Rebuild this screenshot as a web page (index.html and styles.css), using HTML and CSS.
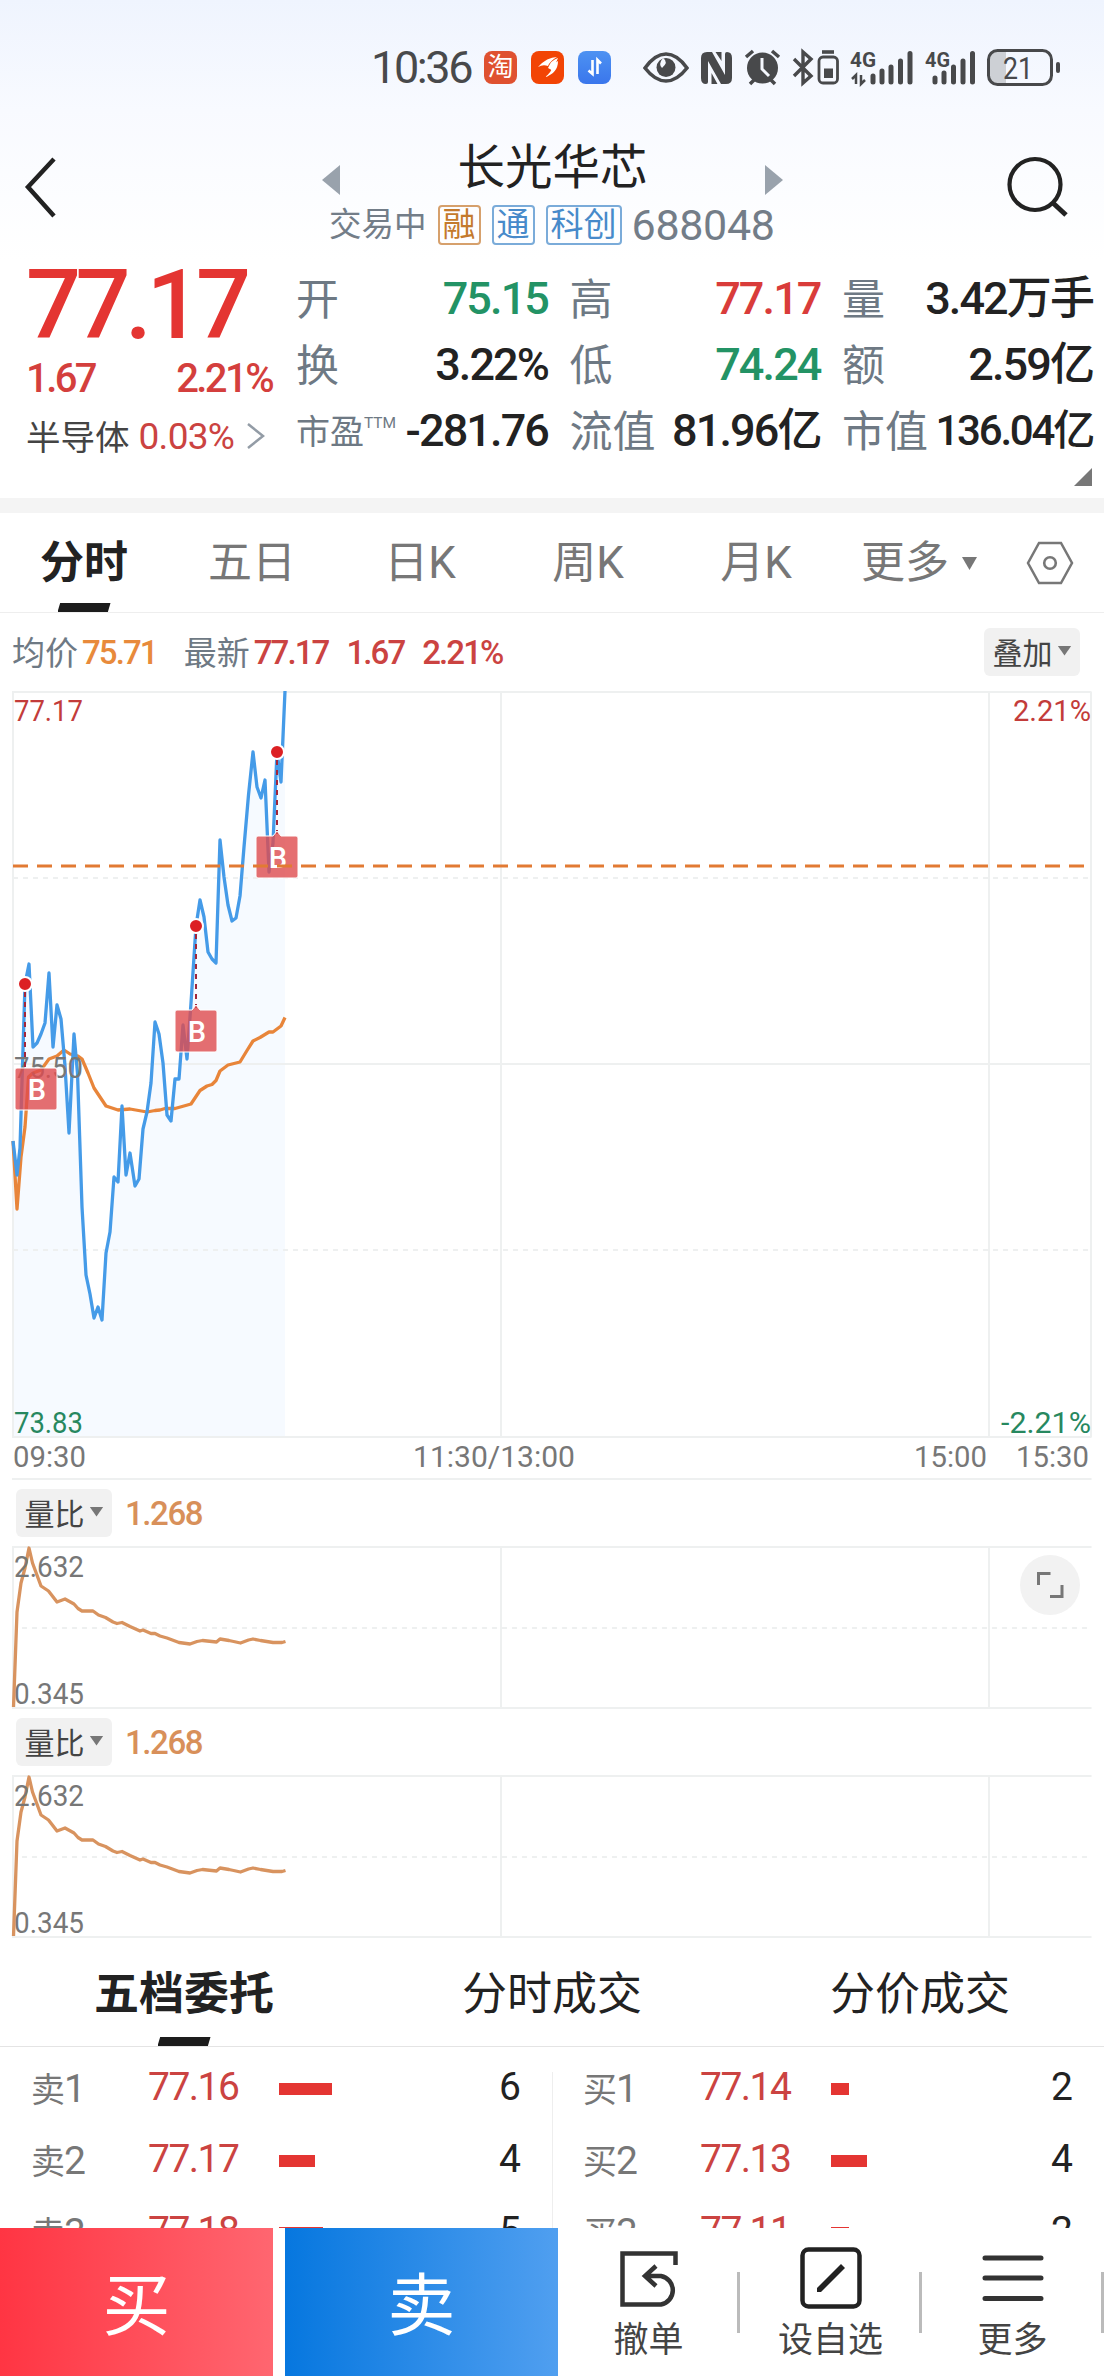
FILE: index.html
```html
<!DOCTYPE html>
<html lang="zh-CN">
<head>
<meta charset="utf-8">
<title>长光华芯 688048</title>
<link rel="stylesheet" href="styles.css">
</head>
<body>
<header class="top">
  <div class="status">
    <span class="clock">10:36</span>
    <div class="apps">
      <span class="app app-tao">淘</span>
      <span class="app app-ali"><svg width="33" height="33" viewBox="0 0 33 33"><g fill="#fff"><path d="M7 16 Q16 6 26 6 Q19 10 17 15 Q12 13 7 16Z"/><path d="M17 17 Q20 9 27 7 Q24 13 22 21 Q20 18 17 17Z"/><path d="M14 26 Q20 22 22 15 Q24 11 27 10 Q27 22 14 26Z"/></g></svg></span>
      <span class="app app-sync"><svg width="33" height="33" viewBox="0 0 33 33"><path d="M14.5 9V23L10.5 19.5M19.5 23V9L23 12.5" fill="none" stroke="#fff" stroke-width="2.6"/></svg></span>
    </div>
    <div class="sys">
      <svg width="46" height="45" viewBox="643 45 46 45"><path d="M645 68Q655 54 666 54Q677 54 687 68Q677 81 666 81Q655 81 645 68Z" fill="none" stroke="#48494b" stroke-width="3.6"/><circle cx="666" cy="67.500" r="9.500" fill="#48494b"/><path d="M663 58Q669 62 662 68Q658 64 663 58Z" fill="#f5f8fe"/></svg>
      <svg width="33" height="45" viewBox="700 45 33 45"><path d="M707 52H712L725 75V54Q725 52 727 52Q732 52 732 58V78Q732 84 726 84H721L708 61V82Q708 84 706 84Q701 84 701 78V58Q701 52 707 52Z" fill="#48494b"/><path d="M715.500 52H721.500V61ZM711.500 84V73L717.500 84Z" fill="#48494b"/></svg>
      <svg width="37" height="45" viewBox="744 45 37 45"><circle cx="762.500" cy="68" r="15.500" fill="#48494b"/><path d="M746 57L753 51M779 57L772 51M750 84L755 79M775 84L770 79" stroke="#48494b" stroke-width="3.500"/><path d="M762 58V69L769 76" fill="none" stroke="#f5f8fe" stroke-width="3"/></svg>
      <svg width="47" height="45" viewBox="792 45 47 45"><path d="M794 59L811 76L803 83V52L811 59L794 76" fill="none" stroke="#48494b" stroke-width="3.400"/><rect x="819" y="57" width="18.500" height="26" rx="4" fill="none" stroke="#48494b" stroke-width="2.800"/><rect x="824" y="68.500" width="9" height="9.500" fill="#48494b"/><path d="M822 52H834" stroke="#48494b" stroke-width="3.600"/></svg>
      <svg width="64" height="45" viewBox="850 45 64 45"><text x="850" y="66.500" textLength="26" lengthAdjust="spacingAndGlyphs" class="net">4G</text><path d="M873 76V82M882 71V82M891 67V82M900.500 61V82M910 53.500V82" stroke="#48494b" stroke-width="5" stroke-linecap="round"/><path d="M856 84V75L852 79M861 75V84L865 80" fill="none" stroke="#48494b" stroke-width="2.500"/></svg>
      <svg width="51" height="45" viewBox="925 45 51 45"><text x="925" y="66.500" textLength="25" lengthAdjust="spacingAndGlyphs" class="net">4G</text><path d="M935 78V82M944 73V82M953.500 67V82M963 61V82M972.500 53.500V82" stroke="#48494b" stroke-width="5" stroke-linecap="round"/></svg>
      <svg width="74" height="45" viewBox="987 45 74 45"><path d="M1006 51H997Q989 51 989 59V76Q989 84 997 84H1006Z" fill="#cdd0d5"/><rect x="988.500" y="50.500" width="63" height="34" rx="9" fill="none" stroke="#48494b" stroke-width="3"/><rect x="1056" y="62" width="4" height="11" rx="2" fill="#48494b"/><text x="1003" y="79" textLength="30" lengthAdjust="spacingAndGlyphs" class="pct">21</text></svg>
    </div>
  </div>
  <div class="nav">
    <svg class="back" width="40" height="64" viewBox="0 0 40 64"><path d="M36 3L10 31L36 60" fill="none" stroke="#222" stroke-width="4.500"/></svg>
    <div class="title">
      <div class="name-row"><i class="tri-left"></i><h1>长光华芯</h1><i class="tri-right"></i></div>
      <div class="sub"><span>交易中</span><b class="tag warm">融</b><b class="tag">通</b><b class="tag">科创</b><span class="code">688048</span></div>
    </div>
    <svg class="search" width="64" height="64" viewBox="0 0 64 64"><circle cx="29" cy="29.500" r="25.500" fill="none" stroke="#222" stroke-width="4.200"/><path d="M47 48L60 60" stroke="#222" stroke-width="5"/></svg>
  </div>
  <section class="quote">
    <div class="price">
      <div class="last">77.17</div>
      <div class="change"><span>1.67</span><span>2.21%</span></div>
      <div class="sector"><span>半导体</span><em>0.03%</em><svg width="20" height="30" viewBox="0 0 20 30"><path d="M2 3L17 15L2 27" fill="none" stroke="#939ca6" stroke-width="2.500"/></svg></div>
    </div>
    <dl class="stats">
      <div><dt>开</dt><dd class="down">75.15</dd></div>
      <div><dt>高</dt><dd class="up">77.17</dd></div>
      <div><dt>量</dt><dd>3.42万手</dd></div>
      <div><dt>换</dt><dd>3.22%</dd></div>
      <div><dt>低</dt><dd class="down">74.24</dd></div>
      <div><dt>额</dt><dd>2.59亿</dd></div>
      <div><dt class="small">市盈<sup>TTM</sup></dt><dd>-281.76</dd></div>
      <div><dt>流值</dt><dd>81.96亿</dd></div>
      <div><dt>市值</dt><dd class="tight">136.04亿</dd></div>
    </dl>
  </section>
  <div class="expand"><i></i></div>
</header>

<nav class="tabs">
  <a class="active">分时</a><a>五日</a><a>日K</a><a>周K</a><a>月K</a>
  <a class="more">更多<i class="caret"></i></a>
  <svg class="hex" width="48" height="44" viewBox="0 0 48 44"><path d="M13 2H35L46 22L35 42H13L2 22Z" fill="none" stroke="#777" stroke-width="2.500"/><circle cx="24" cy="22" r="5.800" fill="none" stroke="#777" stroke-width="2.600"/></svg>
</nav>

<div class="info">
  <span class="lbl">均价</span><b class="avg">75.71</b>
  <span class="lbl second">最新</span><b>77.17</b><b>1.67</b><b>2.21%</b>
  <button class="pill">叠加<i class="caret"></i></button>
</div>

<svg class="chart" width="1104" height="790" viewBox="0 691 1104 790">
  <path d="M13 1141L17 1175L20 1148L25 984L29 964L33 1047L37 1043L41 1034L45 1023L49 973L53 1047L57 1005L61 1019L65 1066L69 1133L74 1034L77.500 1073L82 1207L86 1275L90 1294L94 1318L98 1307L102 1320L106 1253L110 1232L114 1177L118 1182L122 1106L126 1175L130 1153L135 1186L139 1179L143 1129L147 1112L151 1083L155 1022L159 1034L163 1063L167 1115L171 1121L175 1079L179 1079L183 1025L187 1059L191 1003L196 926L200 900L204 917L208 952L212 959L216 963L220 840L224 877L228 905L232 921L236 918L240 896L244 847L248.500 795L253 752L257 787L261 798L265 780L269 872L273 843L277 752L281 782L285 691V1437H13Z" fill="#f6faff"/>
  <path d="M12 692H1091.500M12 1064H1091.500M12 1437H1091.500M12 1479H1091.500M13 692V1437M501 692V1437M989 692V1437M1091 692V1437" class="grid"/>
  <path d="M13 878H1091M13 1250H1091" class="grid dashed"/>
  <path d="M13 1141L17 1209L21 1157L25 1127L28.500 1077L33 1073L41 1070L49 1059L57 1056L64 1050L70 1054L78 1056L82 1059L88 1073L94 1088L100 1097L106 1106L118 1110L130 1109L147 1112L155 1110.500L160 1110L165 1108.500L175 1108.500L191 1104L200 1090.500L207 1086L212 1084.500L216 1080.500L220 1071L228 1065L240 1062L247 1050.500L253 1041L260 1037.500L269 1032L273 1032L281 1026L285 1017.500" class="avg-line"/>
  <path d="M13 1141L17 1175L20 1148L25 984L29 964L33 1047L37 1043L41 1034L45 1023L49 973L53 1047L57 1005L61 1019L65 1066L69 1133L74 1034L77.500 1073L82 1207L86 1275L90 1294L94 1318L98 1307L102 1320L106 1253L110 1232L114 1177L118 1182L122 1106L126 1175L130 1153L135 1186L139 1179L143 1129L147 1112L151 1083L155 1022L159 1034L163 1063L167 1115L171 1121L175 1079L179 1079L183 1025L187 1059L191 1003L196 926L200 900L204 917L208 952L212 959L216 963L220 840L224 877L228 905L232 921L236 918L240 896L244 847L248.500 795L253 752L257 787L261 798L265 780L269 872L273 843L277 752L281 782L285 691" class="price-line"/>
  <g class="axis">
    <text x="14" y="721" textLength="69" lengthAdjust="spacingAndGlyphs" class="t-up">77.17</text>
    <text x="1013" y="721" textLength="78" lengthAdjust="spacingAndGlyphs" class="t-up">2.21%</text>
    <text x="14" y="1077.500" textLength="69" lengthAdjust="spacingAndGlyphs">75.50</text>
    <text x="14" y="1433" textLength="69" lengthAdjust="spacingAndGlyphs" class="t-down">73.83</text>
    <text x="1001" y="1433" textLength="90" lengthAdjust="spacingAndGlyphs" class="t-down">-2.21%</text>
    <text x="13" y="1466.500" textLength="73" lengthAdjust="spacingAndGlyphs">09:30</text>
    <text x="413" y="1466.500" textLength="162" lengthAdjust="spacingAndGlyphs">11:30/13:00</text>
    <text x="914" y="1466.500" textLength="73" lengthAdjust="spacingAndGlyphs">15:00</text>
    <text x="1016" y="1466.500" textLength="73" lengthAdjust="spacingAndGlyphs">15:30</text>
  </g>
  <g class="marks">
    <path d="M25 992V1068M196 934V1008M277 760V834" class="stem"/>
    <path d="M15 1070q0-2 2-2H55q2 0 2 2V1108q0 2-2 2H17q-2 0-2-2Z"/>
    <path d="M175 1012q0-2 2-2H192L196 1005L200 1010H215q2 0 2 2V1050q0 2-2 2H177q-2 0-2-2Z"/>
    <path d="M256 838q0-2 2-2H273L277 831L281 836H296q2 0 2 2V876q0 2-2 2H258q-2 0-2-2Z"/>
    <circle cx="25" cy="984" r="7"/><circle cx="196" cy="926" r="7"/><circle cx="277" cy="752" r="7"/>
    <text x="37" y="1099.500">B</text><text x="197" y="1041.500">B</text><text x="278" y="867.500">B</text>
  </g>
  <path d="M13 866H1086" class="cost"/>
</svg>

<section class="indicator">
  <div class="ind-head"><button class="pill">量比<i class="caret"></i></button><b>1.268</b></div>
  <svg width="1104" height="164" viewBox="0 1545 1104 164">
    <path d="M12 1547H1091.500M12 1708H1091.500M13 1547V1708M501 1547V1708M989 1547V1708" class="grid"/>
    <path d="M22 1628H1087" class="grid dashed"/>
    <path id="ratio" d="M13.500 1707L17 1612L21 1583L25 1568L29 1548L32.500 1563L41 1586L48.500 1591L57 1602L65 1599L74 1604L78 1608.500L82 1611H93L98.500 1615L105.500 1617.500L113 1622L117 1623.500L122 1622.500L130 1626.500L140 1631L143 1630L151 1633.500H155L160 1636L167 1638L179 1642.500L190 1644L197 1641.500L202.500 1640.500L216.500 1642L220 1639L229 1640.500L240.500 1643L248.500 1640L253 1639L260.500 1640.500L273 1642.500H282L285.500 1641.500" class="ratio-line"/>
    <g class="axis"><text x="14" y="1577" textLength="70" lengthAdjust="spacingAndGlyphs">2.632</text><text x="14" y="1704" textLength="70" lengthAdjust="spacingAndGlyphs">0.345</text></g>
    <circle cx="1050" cy="1585" r="30" fill="#f2f2f2"/>
    <path d="M1038.500 1585V1573.500H1050.500M1050 1596.500H1062V1585" fill="none" stroke="#777" stroke-width="3"/>
  </svg>
</section>
<section class="indicator">
  <div class="ind-head"><button class="pill">量比<i class="caret"></i></button><b>1.268</b></div>
  <svg width="1104" height="164" viewBox="0 1545 1104 164">
    <path d="M12 1547H1091.500M12 1708H1091.500M13 1547V1708M501 1547V1708M989 1547V1708" class="grid"/>
    <path d="M22 1628H1087" class="grid dashed"/>
    <use href="#ratio"/>
    <g class="axis"><text x="14" y="1577" textLength="70" lengthAdjust="spacingAndGlyphs">2.632</text><text x="14" y="1704" textLength="70" lengthAdjust="spacingAndGlyphs">0.345</text></g>
  </svg>
</section>

<nav class="book-tabs"><a class="active">五档委托</a><a>分时成交</a><a>分价成交</a></nav>
<section class="book">
  <ul>
    <li><span>卖<small>1</small></span><em>77.16</em><i style="width:53px"></i><b>6</b></li>
    <li><span>卖<small>2</small></span><em>77.17</em><i style="width:36px"></i><b>4</b></li>
    <li><span>卖<small>3</small></span><em>77.18</em><i style="width:44px"></i><b>5</b></li>
  </ul>
  <ul>
    <li><span>买<small>1</small></span><em>77.14</em><i style="width:18px"></i><b>2</b></li>
    <li><span>买<small>2</small></span><em>77.13</em><i style="width:36px"></i><b>4</b></li>
    <li><span>买<small>3</small></span><em>77.11</em><i style="width:18px"></i><b>2</b></li>
  </ul>
</section>

<footer class="actions">
  <button class="buy">买</button>
  <button class="sell">卖</button>
  <div class="act"><svg width="62" height="62" viewBox="0 0 62 62"><path d="M57.500 18V6.500H4.500V57.500H43A14.500 14.500 0 0 0 43 29H28M38 19L27 29L38 39" fill="none" stroke="#333" stroke-width="4.500"/></svg><span>撤单</span></div>
  <i class="rule"></i>
  <div class="act"><svg width="62" height="62" viewBox="0 0 62 62"><rect x="2.500" y="2.500" width="57" height="57" rx="6" fill="none" stroke="#222" stroke-width="4.500"/><path d="M17 45V41L41 17L45 21L21 45Z" fill="#222"/></svg><span>设自选</span></div>
  <i class="rule"></i>
  <div class="act"><svg width="62" height="62" viewBox="0 0 62 62"><path d="M3 11H59M3 31H59M3 51.500H59" stroke="#333" stroke-width="5" stroke-linecap="round"/></svg><span>更多</span></div>
  <i class="rule"></i>
</footer>
</body>
</html>
```
FILE: styles.css
```css
* { box-sizing: border-box; margin: 0; padding: 0; }
body { width: 1104px; height: 2376px; overflow: hidden; display: flex; flex-direction: column; background: #fff; color: #222; font-family: Roboto, "Noto Sans CJK SC", sans-serif; }
i, em { font-style: normal; }
button { border: 0; font-family: inherit; }
svg { display: block; flex: none; }
ul { list-style: none; }

.top { height: 513px; flex: none; display: flex; flex-direction: column; border-bottom: 15px solid #f4f4f4; background: linear-gradient(#eff4fe 0, #f8faff 110px, #fff 260px); }

.status { height: 45px; margin-top: 45px; display: flex; align-items: center; padding-left: 371px; flex: none; }
.clock { width: 113px; font-size: 45px; line-height: 45px; letter-spacing: -2.4px; color: #48494b; }
.apps { display: flex; gap: 14px; width: 159px; }
.app { width: 33px; height: 33px; border-radius: 8px; text-align: center; font-size: 26px; line-height: 32px; color: #fff; }
.app-tao { background: #df5130; }
.app-ali { background: #f24405; }
.app-sync { background: linear-gradient(#4d92f2, #3a76ec); }
.sys { display: flex; gap: 11px; }
.net { font-size: 21px; font-weight: 700; fill: #48494b; }
.pct { font-size: 32px; fill: #48494b; }

.nav { height: 160px; flex: none; display: flex; padding-left: 18px; }
.back { margin-top: 66px; }
.search { margin-top: 65px; margin-left: 219px; }
.title { width: 470px; margin-top: 46px; margin-left: 259px; }
.name-row { display: flex; align-items: center; justify-content: space-between; height: 64px; padding: 0 4px 0 5px; }
h1 { font-size: 47.500px; line-height: 64px; font-weight: 400; }
.tri-left, .tri-right { width: 18px; height: 30px; background: #99a2ac; margin-top: 24px; }
.tri-left { clip-path: polygon(0 50%, 100% 0, 100% 100%); }
.tri-right { clip-path: polygon(0 0, 100% 50%, 0 100%); }
.sub { display: flex; align-items: center; height: 40px; margin-top: 5px; padding-left: 12px; font-size: 32.500px; line-height: 40px; color: #737d88; }
.tag { height: 40px; padding: 0 3px; margin-left: 11px; font-size: 33px; line-height: 36px; font-weight: 400; color: #478aca; border: 2px solid #7aabd9; border-radius: 4px; }
.tag.warm { color: #c47a2c; border-color: #d6a06c; }
.code { font-size: 43px; letter-spacing: -.3px; margin-left: 10px; }

.quote { display: flex; height: 216px; flex: none; }
.price { width: 296px; padding: 10px 0 0 26px; color: #e43532; }
.last { font-size: 97px; line-height: 90px; font-weight: 500; letter-spacing: -5.600px; }
.change { display: flex; justify-content: space-between; width: 246px; font-size: 40px; line-height: 58px; font-weight: 500; letter-spacing: -2.600px; color: #d43f3d; }
.sector { display: flex; align-items: center; height: 56px; color: #444; font-size: 34.500px; }
.sector span { margin-top: -3px; }
.sector em { color: #cb4341; font-size: 37px; letter-spacing: -.7px; margin: 0 12px 0 9px; }
.stats { display: grid; grid-template-columns: 252px 251px 251px; column-gap: 21.500px; grid-auto-rows: 66px; padding-top: 16px; }
.stats div { display: flex; justify-content: space-between; line-height: 66px; white-space: nowrap; }
.stats dt { color: #6e7984; font-size: 43px; padding-top: 1px; }
.stats dt.small { font-size: 34px; display: flex; }
.stats sup { font-size: 15.500px; line-height: 48px; }
.stats dd { font-size: 45px; font-weight: 500; letter-spacing: -1.900px; }
.stats .tight { font-size: 42px; letter-spacing: -2.200px; }
.up { color: #d93c3a; }
.down { color: #239365; }
.expand { display: flex; justify-content: flex-end; padding: 2px 12px 0; }
.expand i { width: 18px; height: 18px; background: #777; clip-path: polygon(100% 0, 100% 100%, 0 100%); }

.tabs { height: 100px; flex: none; display: flex; align-items: center; border-bottom: 1px solid #eee; font-size: 44px; color: #777; }
.tabs a { width: 168px; height: 99px; padding-top: 2px; line-height: 97px; text-align: center; }
.tabs .active, .book-tabs .active { font-weight: 700; color: #222; display: flex; flex-direction: column; align-items: center; }
.active::after { content: ""; flex: none; width: 53px; height: 9px; margin-top: -9px; background: #1c1c1c; clip-path: polygon(5% 0, 100% 0, 95% 100%, 0 100%); }
.tabs .more { width: 165px; margin-left: 21px; text-align: left; display: flex; align-items: center; }
.caret { display: inline-block; width: 14px; height: 10px; background: #777; clip-path: polygon(0 0, 100% 0, 50% 100%); }
.more .caret { width: 15px; height: 13px; margin-left: 13px; }

.info { height: 78px; flex: none; display: flex; align-items: center; padding: 0 24px 0 12px; font-size: 33px; }
.info .lbl { color: #6e7984; margin-top: -2px; }
.info .second { margin-left: 27px; }
.info b { font-weight: 500; color: #cb4341; letter-spacing: -1.900px; margin: 0 14px 0 4px; }
.info b.avg { color: #e88a3b; margin-right: 0; }
.pill { width: 96px; height: 48px; border-radius: 6px; background: #f1f1f1; color: #444; font-size: 30px; display: flex; align-items: center; justify-content: center; gap: 5px; padding-bottom: 3px; }
.info .pill { margin-left: auto; }

.chart { margin-bottom: 8px; }
.grid { fill: none; stroke: #eef0f0; stroke-width: 2; }
.grid.dashed { stroke-dasharray: 5 5; }
.price-line, .avg-line, .ratio-line { fill: none; stroke: #459be8; stroke-width: 3.300; stroke-linejoin: round; }
.avg-line { stroke: #e8853a; }
.ratio-line { stroke: #d8935f; }
.axis text { font-size: 29.500px; fill: #777; }
.axis .t-up { fill: #c33c3a; }
.axis .t-down { fill: #27885f; }
.marks path { fill: #df4b4e; fill-opacity: .8; stroke: #fff; stroke-width: 1; }
.marks .stem { fill: none; stroke: #a3263a; stroke-width: 2; stroke-dasharray: 5 5; }
.marks circle { fill: #dc2023; stroke: #fff; stroke-width: 2; }
.marks text { fill: #fff; font-size: 29px; font-weight: 500; text-anchor: middle; }
.cost { fill: none; stroke: #e27a33; stroke-width: 3; stroke-dasharray: 15 9; }

.indicator { height: 229px; flex: none; }
.ind-head { height: 56px; display: flex; align-items: flex-start; padding-left: 16px; }
.ind-head b { font-size: 33px; line-height: 49px; font-weight: 500; letter-spacing: -1.400px; color: #d8905a; margin-left: 13px; }

.book-tabs { height: 100px; flex: none; display: grid; grid-template-columns: repeat(3, 1fr); border-bottom: 1px solid #e4e4e4; text-align: center; font-size: 45px; line-height: 95px; }
.book-tabs .active::after { margin-top: -5px; }
.book { height: 181px; flex: none; overflow: hidden; display: grid; grid-template-columns: 552px 552px; padding-top: 4px; }
.book ul + ul { background: linear-gradient(#eee, #eee) 0 21px / 1px 100% no-repeat; }
.book li { height: 72px; display: flex; align-items: center; padding: 0 31px; }
.book span { width: 117px; font-size: 34px; color: #777; letter-spacing: -1px; }
.book small { font-size: 39px; }
.book em { width: 131px; font-size: 39px; letter-spacing: -1.500px; color: #cb4341; }
.book i { height: 12px; background: #e43532; margin-top: 4px; }
.book b { margin-left: auto; font-size: 39px; font-weight: 400; }

.actions { height: 148px; flex: none; display: flex; align-items: center; background: #fff; }
.buy, .sell { width: 273px; height: 148px; color: #fff; font-size: 68px; padding-bottom: 4px; flex: none; }
.buy { background: linear-gradient(90deg, #ff3543, #ff6670); margin-right: 12px; }
.sell { background: linear-gradient(90deg, #0677df, #509ff0); }
.act { flex: 1; height: 148px; display: flex; flex-direction: column; align-items: center; padding: 19px 0 0 2px; font-size: 35px; line-height: 63px; color: #444; }
.rule { width: 3px; height: 61px; background: #bbb; flex: none; }
```
